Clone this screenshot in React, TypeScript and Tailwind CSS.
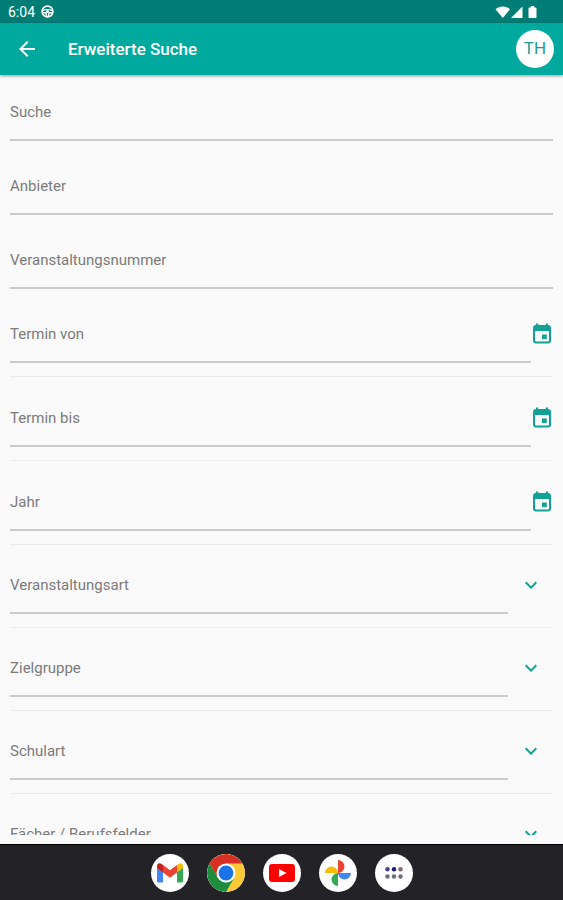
import { useState, type ReactNode } from "react";
import { MdArrowBack, MdKeyboardArrowDown } from "react-icons/md";
import { clsx } from "clsx";

interface FieldProps {
  id: string;
  label: string;
}

const textFields: FieldProps[] = [
  { id: "suche", label: "Suche" },
  { id: "anbieter", label: "Anbieter" },
  { id: "nummer", label: "Veranstaltungsnummer" },
];

const dateFields: FieldProps[] = [
  { id: "termin-von", label: "Termin von" },
  { id: "termin-bis", label: "Termin bis" },
  { id: "jahr", label: "Jahr" },
];

const selectFields: (FieldProps & { options: string[] })[] = [
  { id: "art", label: "Veranstaltungsart", options: ["Seminar", "Tagung", "Workshop"] },
  { id: "zielgruppe", label: "Zielgruppe", options: ["Lehrkräfte", "Schulleitung"] },
  { id: "schulart", label: "Schulart", options: ["Grundschule", "Gymnasium"] },
  { id: "faecher", label: "Fächer / Berufsfelder", options: ["Deutsch", "Mathematik"] },
];

const controlClass =
  "col-start-1 row-start-1 h-full w-full appearance-none rounded-none border-b-2 border-[#cbcbcb] bg-transparent pt-4 text-[15px] text-gray-800 outline-none focus:border-[#00a99d]";

// Label and control share one grid cell, the label moves up once there is a value
function FloatingLabel({ id, label, filled }: FieldProps & { filled: boolean }) {
  return (
    <label
      htmlFor={id}
      className={clsx(
        "pointer-events-none col-start-1 row-start-1 self-end justify-self-start text-[15px] leading-5 text-[#7b7b7b]",
        filled ? "pb-10" : "pb-[19px]"
      )}
    >
      {label}
    </label>
  );
}

function TextField({ id, label }: FieldProps) {
  const [value, setValue] = useState("");

  return (
    <div className="grid flex-1">
      <input
        id={id}
        type="text"
        value={value}
        onChange={(e) => setValue(e.target.value)}
        className={controlClass}
      />
      <FloatingLabel id={id} label={label} filled={value !== ""} />
    </div>
  );
}

function SelectField({ id, label, options }: FieldProps & { options: string[] }) {
  const [value, setValue] = useState("");

  return (
    <div className="grid flex-1">
      <select
        id={id}
        value={value}
        onChange={(e) => setValue(e.target.value)}
        className={controlClass}
      >
        <option value=""></option>
        {options.map((option) => (
          <option key={option}>{option}</option>
        ))}
      </select>
      <FloatingLabel id={id} label={label} filled={value !== ""} />
    </div>
  );
}

function CalendarIcon() {
  return (
    <svg viewBox="1 0 22 24" className="h-6 w-[22px]" fill="none" aria-hidden="true">
      <rect x="4" y="4" width="16" height="16.5" rx="2" stroke="currentColor" strokeWidth="2" />
      <path fill="currentColor" d="M4 4h16v5H4zM6 1.5h2.2V4H6zM15.8 1.5H18V4h-2.2zM12 12.5h4.8V17H12z" />
    </svg>
  );
}

function StatusBar() {
  return (
    <div className="flex h-[23px] shrink-0 items-center justify-between bg-[#007d75] pl-2 pr-6 text-white">
      <div className="flex items-center gap-1.5 text-sm leading-4">
        <span>6:04</span>
        <svg viewBox="0 0 14 14" className="size-[13px]" fill="none" stroke="currentColor" aria-hidden="true">
          <circle cx="7" cy="7" r="5.8" strokeWidth="1.8" />
          <path d="M1.5 6.2c3-1.6 8-1.6 11 0M2 8.4h3.4L6 12.4M12 8.4H8.6L8 12.4" strokeWidth="1.5" />
          <circle cx="7" cy="7" r="1.6" fill="currentColor" stroke="none" />
        </svg>
      </div>
      <svg viewBox="0 0 44 14" className="h-3.5 w-11" fill="currentColor" aria-hidden="true">
        <path d="M0.5 4.2C4.5 0.6 11 0.6 15 4.2L7.8 13z" />
        <path d="M27.5 1.5V13H16z" />
        <path d="M35.8 1h3.4v1.4h1.3c.6 0 1 .4 1 1V12c0 .6-.4 1-1 1h-6c-.6 0-1-.4-1-1V3.4c0-.6.4-1 1-1h1.3z" />
      </svg>
    </div>
  );
}

function GmailIcon() {
  return (
    <svg viewBox="0 0 26 20" className="w-[26px]" aria-hidden="true">
      <path fill="#4285f4" d="M0 4v14c0 1.1.9 1.6 1.8 1.6H6V9z" />
      <path fill="#34a853" d="M20 9v10.6h4.2c1 0 1.8-.7 1.8-1.6V4z" />
      <path fill="#fbbc04" d="M20 2v7.5L26 5V3c0-2.6-2.7-3.6-4.6-2.1z" />
      <path fill="#ea4335" d="M6 9.5V2l7 5.2L20 2v7.5l-7 5.2z" />
      <path fill="#c5221f" d="M0 3v2l6 4.5V2L4.6.9C2.7-.6 0 .4 0 3z" />
    </svg>
  );
}

function ChromeIcon() {
  return (
    <svg viewBox="0 0 38 38" className="size-[38px]" aria-hidden="true">
      <circle cx="19" cy="19" r="19" fill="#fcc934" />
      <path fill="#d93025" d="M2.55 9.5A19 19 0 0 1 35.45 9.5H19L10.77 23.75z" />
      <path fill="#1e8e3e" d="M2.55 9.5A19 19 0 0 0 19 38l8.23-14.25L19 28.5 10.77 23.75z" />
      <circle cx="19" cy="19" r="9.5" fill="#fff" />
      <circle cx="19" cy="19" r="7.4" fill="#1a73e8" />
    </svg>
  );
}

function YoutubeIcon() {
  return (
    <svg viewBox="0 0 26 18" className="w-[26px]" aria-hidden="true">
      <rect width="26" height="18" rx="3" fill="#f00" />
      <path fill="#fff" d="M10 5l7.5 4-7.5 4z" />
    </svg>
  );
}

function PhotosIcon() {
  return (
    <svg viewBox="0 0 28 28" className="w-7" aria-hidden="true">
      <path fill="#ea4335" d="M14 1a6.5 6.5 0 0 1 0 13z" />
      <path fill="#4285f4" d="M27 14a6.5 6.5 0 0 1-13 0z" />
      <path fill="#34a853" d="M14 27a6.5 6.5 0 0 1 0-13z" />
      <path fill="#fbbc04" d="M1 14a6.5 6.5 0 0 1 13 0z" />
    </svg>
  );
}

function AppsIcon() {
  return (
    <svg viewBox="0 0 18 12" className="w-[18px]" aria-hidden="true">
      <circle cx="2.5" cy="2.2" r="2.2" fill="#4a4580" />
      <circle cx="9" cy="2.2" r="2.2" fill="#1c1c7c" />
      <circle cx="15.5" cy="2.2" r="2.2" fill="#8a6478" />
      <circle cx="2.5" cy="9.5" r="2.2" fill="#6c6c78" />
      <circle cx="9" cy="9.5" r="2.2" fill="#6c6c78" />
      <circle cx="15.5" cy="9.5" r="2.2" fill="#6c6c78" />
    </svg>
  );
}

const apps: { name: string; icon: ReactNode }[] = [
  { name: "Gmail", icon: <GmailIcon /> },
  { name: "Chrome", icon: <ChromeIcon /> },
  { name: "YouTube", icon: <YoutubeIcon /> },
  { name: "Fotos", icon: <PhotosIcon /> },
  { name: "Apps", icon: <AppsIcon /> },
];

export default function App() {
  return (
    <div className="flex h-screen flex-col bg-[#fafafa] font-[Roboto,sans-serif]">
      <StatusBar />
      <header className="z-10 flex h-[52px] shrink-0 items-center bg-[#00a99d] pl-[15px] pr-[9px] text-white shadow-[0_1px_3px_rgba(0,0,0,0.4)]">
        <button aria-label="Zurück">
          <MdArrowBack className="size-6" />
        </button>
        <h1 className="ml-[29px] flex-1 text-[17px] font-medium leading-6">Erweiterte Suche</h1>
        <button className="size-[38px] rounded-full bg-white text-[17px] text-[#1a9c93]">TH</button>
      </header>

      <main className="mb-[9px] min-h-0 flex-1 overflow-y-auto px-2.5 [scrollbar-width:none]">
        <form>
          <div className="mb-1 flex flex-col gap-2">
            {textFields.map((field) => (
              <div key={field.id} className="flex h-[66px]">
                <TextField {...field} />
              </div>
            ))}
          </div>
          {dateFields.map((field) => (
            <div key={field.id} className="flex h-[84px] border-b border-[#ececec] pb-[13px]">
              <TextField {...field} />
              <button
                type="button"
                aria-label={`${field.label} auswählen`}
                className="flex items-end pb-[17px] text-[#12a195]"
              >
                <CalendarIcon />
              </button>
            </div>
          ))}
          {selectFields.map((field) => (
            <div key={field.id} className="flex h-[83px] border-b border-[#ececec] pb-[13px]">
              <SelectField {...field} />
              <button
                type="button"
                aria-label={`${field.label} öffnen`}
                className="flex w-[45px] items-end justify-center pb-[17px] text-[#12a195]"
              >
                <MdKeyboardArrowDown className="size-6" />
              </button>
            </div>
          ))}
        </form>
      </main>

      <nav className="flex h-14 shrink-0 items-center justify-center gap-[18px] border-t border-black bg-[#232327]">
        {apps.map((app) => (
          <button
            key={app.name}
            aria-label={app.name}
            className="flex size-[38px] items-center justify-center overflow-hidden rounded-full bg-white"
          >
            {app.icon}
          </button>
        ))}
      </nav>
    </div>
  );
}
